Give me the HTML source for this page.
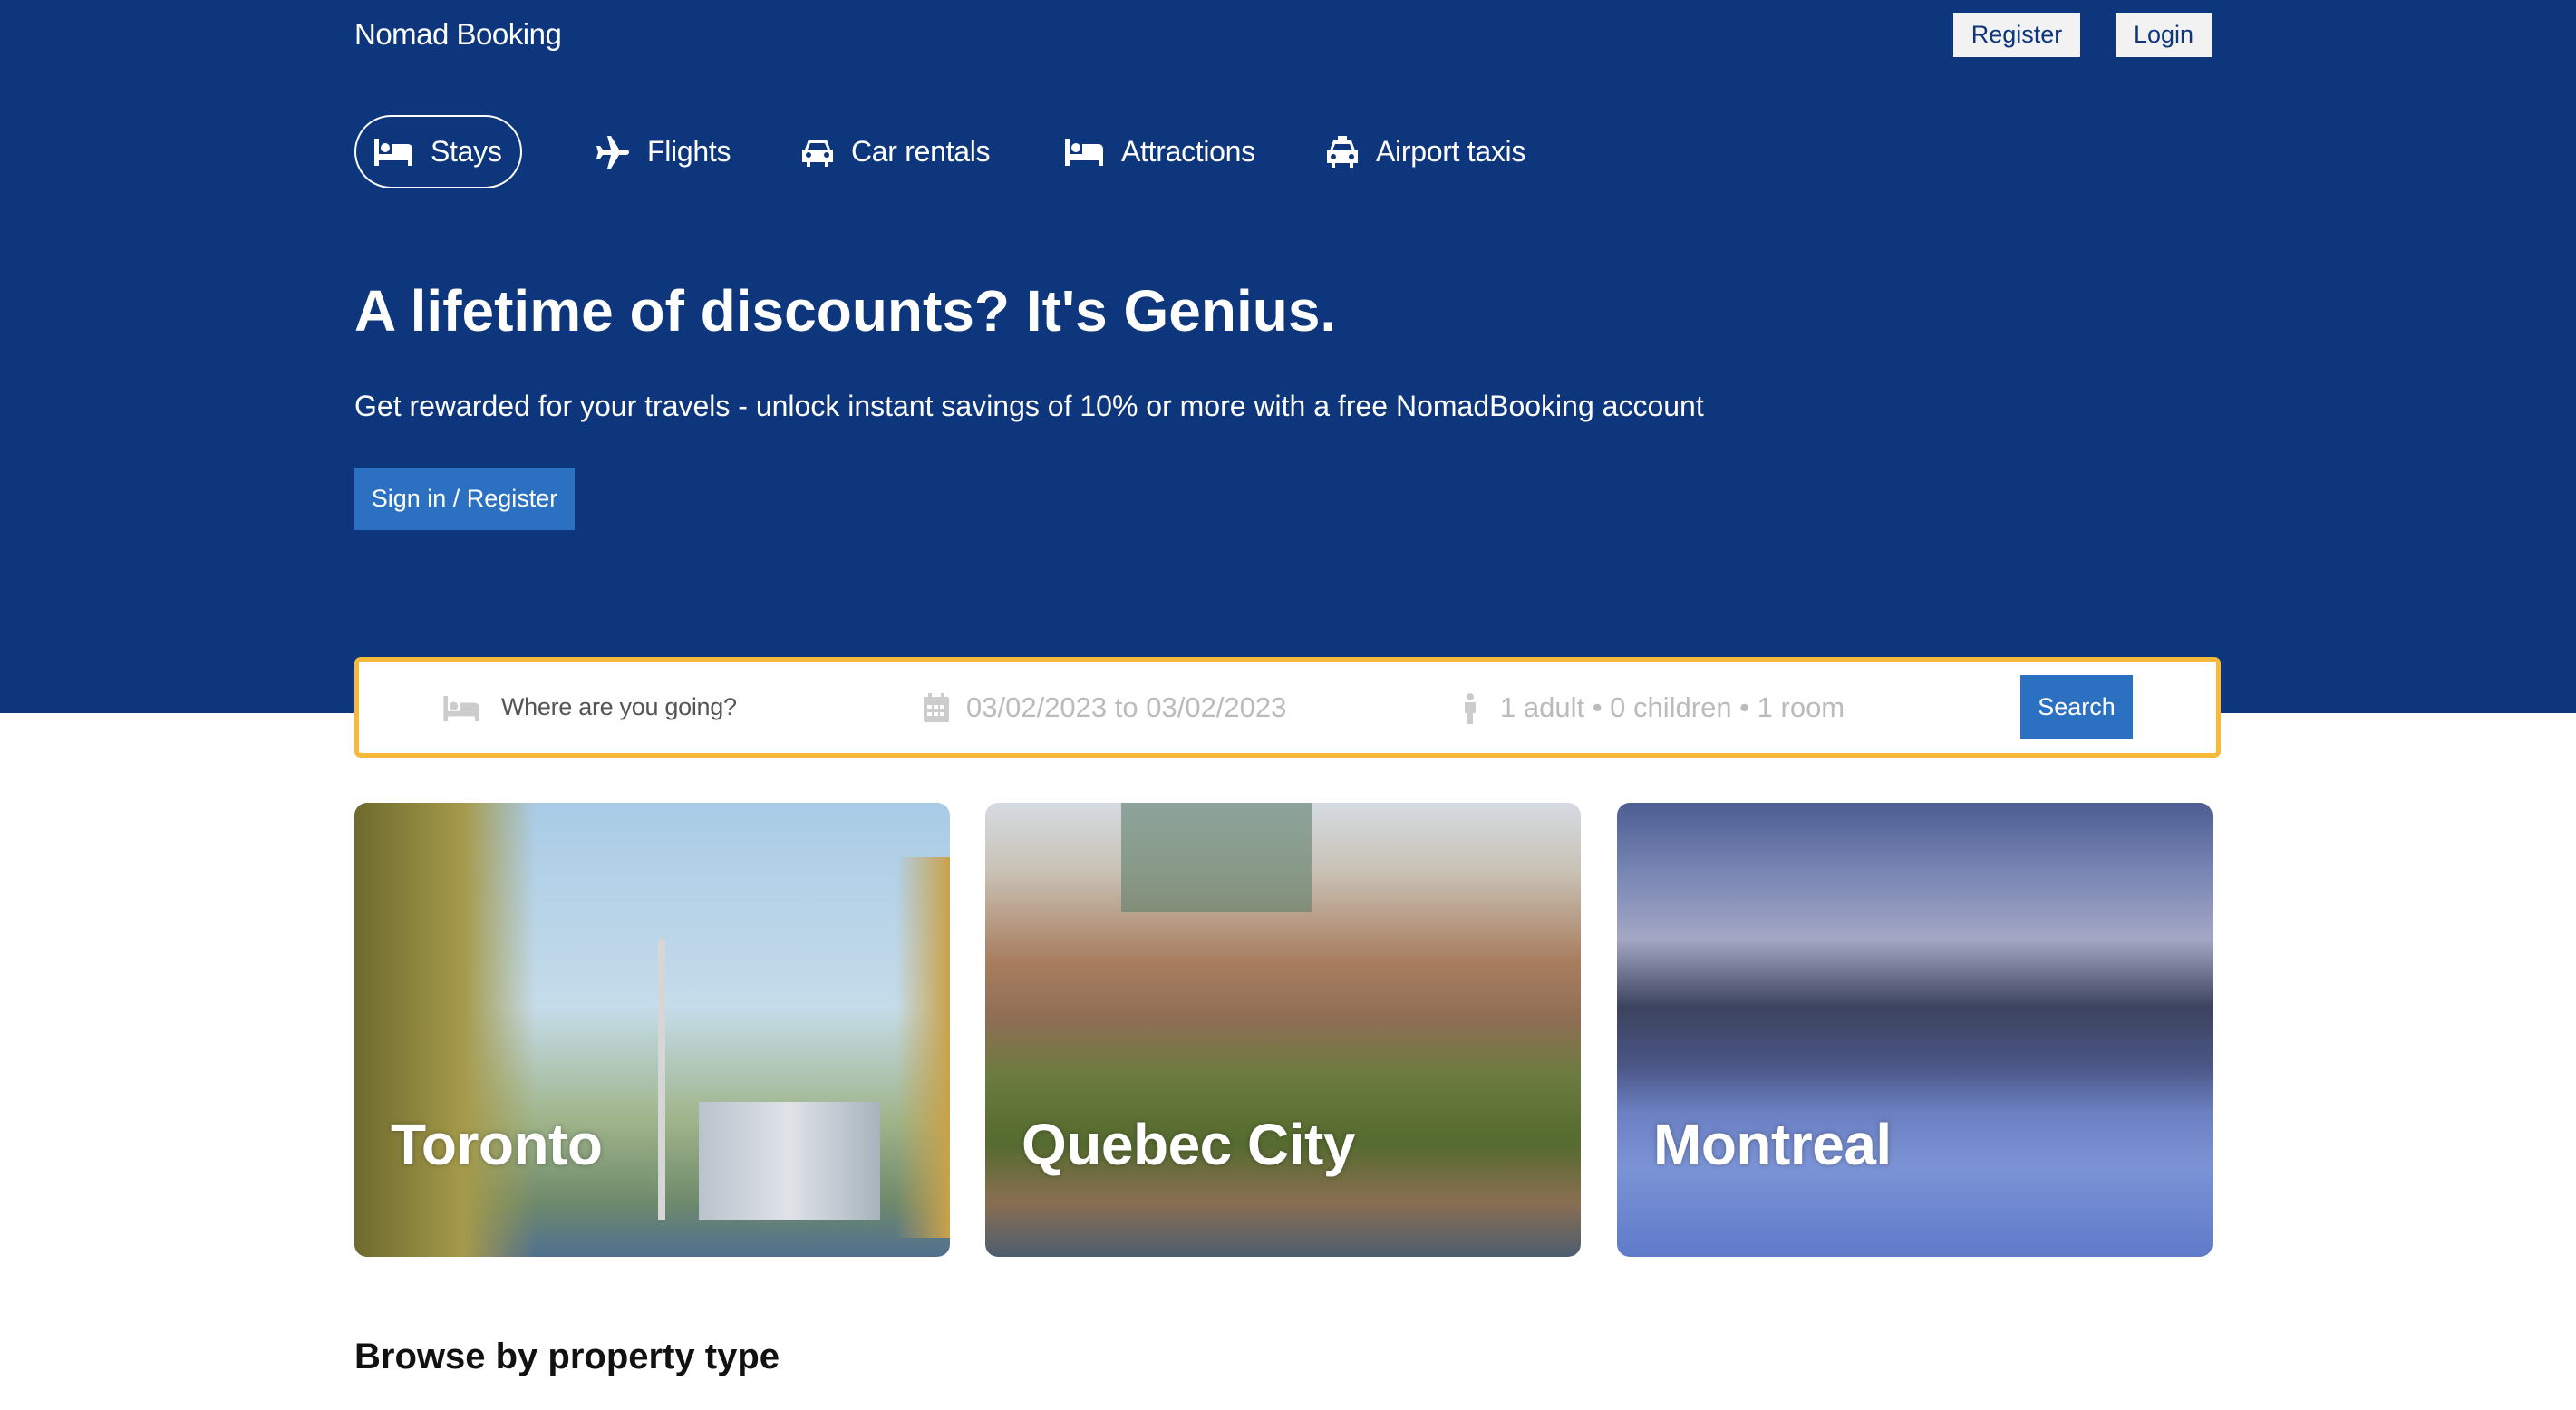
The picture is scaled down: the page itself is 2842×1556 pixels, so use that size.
<!DOCTYPE html>
<html><head><meta charset="utf-8"><style>
*{margin:0;padding:0;box-sizing:border-box}
body{width:2842px;height:1556px;overflow:hidden;background:#fff;font-family:"Liberation Sans",Arial,sans-serif;position:relative}
.hdr{position:absolute;left:0;top:0;width:2842px;height:787px;background:#0e367d}
.abs{position:absolute}
.w{color:#fff}
.btn{position:absolute;background:#f2f2f2;color:#0e367d;font-size:27px;display:flex;align-items:center;justify-content:center}
.nav{position:absolute;top:127px;height:81px;display:flex;align-items:center;color:#fff;font-size:32px;letter-spacing:-0.3px}
.nav svg{margin-right:20px}
.card{position:absolute;top:886px;width:657px;height:501px;border-radius:14px;overflow:hidden}
.lbl{position:absolute;left:40px;top:340px;color:#fff;font-weight:bold;font-size:64px;text-shadow:0 0 6px rgba(0,0,0,.3);letter-spacing:-0.5px}
</style></head><body>
<div class="hdr"></div>
<div class="abs w" style="left:391px;top:19px;font-size:33px;letter-spacing:-0.5px">Nomad Booking</div>
<div class="btn" style="left:2155px;top:14px;width:140px;height:49px">Register</div>
<div class="btn" style="left:2334px;top:14px;width:106px;height:49px">Login</div>

<div class="abs" style="left:391px;top:127px;width:185px;height:81px;border:2px solid #fff;border-radius:41px"></div>
<div class="nav" style="left:413px"><svg width="42" height="30" viewBox="0 0 42 30"><rect x="0" y="0" width="5" height="30" fill="#fff"/><circle cx="12" cy="10" r="5" fill="#fff"/><path d="M19 6h18a5 5 0 0 1 5 5v19h-5v-6H5v-7h14z" fill="#fff"/></svg>Stays</div>
<div class="nav" style="left:656px"><svg width="38" height="36" viewBox="0 0 38 36"><path d="M14 0h4l9 15h8a3 3 0 0 1 0 6h-8l-9 15h-4l4-15H9l-3 4H2l2-7-2-7h4l3 4h9z" fill="#fff"/></svg>Flights</div>
<div class="nav" style="left:885px"><svg width="34" height="32" viewBox="0 0 34 32"><path d="M7 2h20l4 11h3v14h-5v5h-4v-5H9v5H5v-5H0V13h3zM9 6l-3 7h22l-3-7z" fill="#fff"/><circle cx="7" cy="19" r="3" fill="#0e367d"/><circle cx="27" cy="19" r="3" fill="#0e367d"/></svg>Car rentals</div>
<div class="nav" style="left:1175px"><svg width="42" height="30" viewBox="0 0 42 30"><rect x="0" y="0" width="5" height="30" fill="#fff"/><circle cx="12" cy="10" r="5" fill="#fff"/><path d="M19 6h18a5 5 0 0 1 5 5v19h-5v-6H5v-7h14z" fill="#fff"/></svg>Attractions</div>
<div class="nav" style="left:1464px"><svg width="34" height="36" viewBox="0 0 34 36"><path d="M12 0h10v5h5l4 11h3v14h-5v5h-4v-5H9v5H5v-5H0V16h3l4-11h5zM9 9l-3 7h22l-3-7z" fill="#fff"/><circle cx="7" cy="23" r="3" fill="#0e367d"/><circle cx="27" cy="23" r="3" fill="#0e367d"/></svg>Airport taxis</div>

<div class="abs w" style="left:391px;top:306px;font-size:64px;font-weight:bold">A lifetime of discounts? It's Genius.</div>
<div class="abs w" style="left:391px;top:430px;font-size:32px">Get rewarded for your travels - unlock instant savings of 10% or more with a free NomadBooking account</div>
<div class="abs w" style="left:391px;top:516px;width:243px;height:69px;background:#2c70c2;font-size:27px;display:flex;align-items:center;justify-content:center">Sign in / Register</div>

<div class="abs" style="left:391px;top:725px;width:2059px;height:111px;background:#fff;border:5px solid #f7b939;border-radius:7px"></div>
<svg class="abs" style="left:489px;top:768px" width="40" height="28" viewBox="0 0 42 30"><rect x="0" y="0" width="5" height="30" fill="#ccc"/><circle cx="12" cy="12" r="5" fill="#ccc"/><path d="M19 8h18a5 5 0 0 1 5 5v17h-5v-6H5v-6h14z" fill="#ccc"/></svg>
<div class="abs" style="left:553px;top:765px;font-size:27px;color:#555;letter-spacing:-0.3px">Where are you going?</div>
<svg class="abs" style="left:1019px;top:765px" width="28" height="32" viewBox="0 0 28 32"><rect x="5" y="0" width="4" height="6" fill="#ccc"/><rect x="19" y="0" width="4" height="6" fill="#ccc"/><rect x="0" y="4" width="28" height="28" rx="2" fill="#ccc"/><g fill="#fff"><rect x="4" y="13" width="5" height="4"/><rect x="11" y="13" width="5" height="4"/><rect x="18" y="13" width="5" height="4"/><rect x="4" y="21" width="5" height="4"/><rect x="11" y="21" width="5" height="4"/><rect x="18" y="21" width="5" height="4"/></g></svg>
<div class="abs" style="left:1066px;top:763px;font-size:31px;color:#bbb">03/02/2023 to 03/02/2023</div>
<svg class="abs" style="left:1613px;top:765px" width="18" height="34" viewBox="0 0 18 34"><circle cx="9" cy="4" r="4" fill="#ccc"/><path d="M3 10h12v12h-3v12H6V22H3z" fill="#ccc"/></svg>
<div class="abs" style="left:1655px;top:763px;font-size:31px;color:#bbb">1 adult • 0 children • 1 room</div>
<div class="abs w" style="left:2229px;top:745px;width:124px;height:71px;background:#2c70c2;font-size:27px;display:flex;align-items:center;justify-content:center">Search</div>

<div class="card" style="left:391px;background:linear-gradient(180deg,#a9cbe6 0%,#c5dcea 45%,#9fb48a 70%,#6f8a6c 88%,#4f6f8f 100%)">
<div style="position:absolute;left:0;top:0;width:200px;height:501px;background:linear-gradient(90deg,#6d6a2e,#a59a4a 60%,rgba(160,150,80,0))"></div>
<div style="position:absolute;right:0;top:60px;width:60px;height:420px;background:linear-gradient(90deg,rgba(200,160,60,0),#c9a24a)"></div>
<div style="position:absolute;left:335px;top:150px;width:8px;height:310px;background:#d6d6d6"></div>
<div style="position:absolute;left:380px;top:330px;width:200px;height:130px;background:linear-gradient(90deg,#b9c3cc,#dfe3e8,#a8b3bd)"></div>
<div class="lbl">Toronto</div></div>
<div class="card" style="left:1087px;background:linear-gradient(180deg,#d5dbe3 0%,#c9c2b5 15%,#a87d5e 35%,#8e6e55 48%,#6c7b3f 60%,#556b2f 75%,#8a6e52 88%,#4d5d6f 100%)">
<div style="position:absolute;left:150px;top:0;width:210px;height:120px;background:#5e7f6a;opacity:.6"></div>
<div class="lbl">Quebec City</div></div>
<div class="card" style="left:1784px;background:linear-gradient(180deg,#4e5d92 0%,#7785b4 15%,#a3a7c4 30%,#3c435e 45%,#4b5686 58%,#6b7fc1 68%,#7b93d6 80%,#5f7bc9 100%)">
<div class="lbl">Montreal</div></div>

<div class="abs" style="left:391px;top:1475px;font-size:40px;font-weight:bold;color:#111">Browse by property type</div>
</body></html>
